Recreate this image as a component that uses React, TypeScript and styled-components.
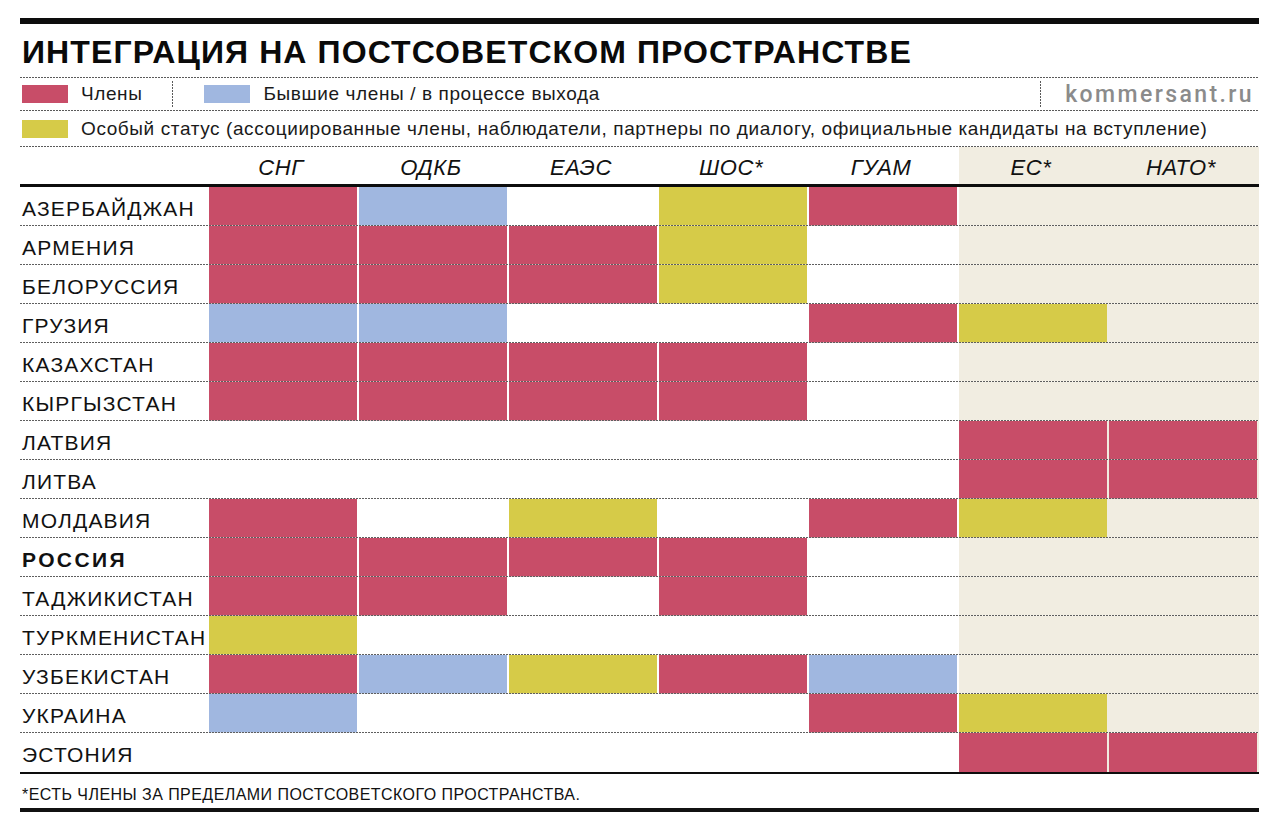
import React from "react";
import styled, { createGlobalStyle, css } from "styled-components";

const RED = "#c84d68";
const BLUE = "#a0b7e0";
const YELLOW = "#d6cb48";
const BEIGE = "#f1ede1";

const GlobalStyle = createGlobalStyle`
  html, body { margin: 0; padding: 0; background: #fff; }
  body { font-family: "Liberation Sans", Arial, sans-serif; color: #111; }
`;

const dottedBottom = css`
  background-image: repeating-linear-gradient(90deg, #5a5a5a 0 2px, transparent 2px 3px);
  background-size: 100% 1px;
  background-repeat: no-repeat;
  background-position: left bottom;
`;

const Page = styled.div`
  width: 1239px;
  margin: 18px 0 0 20px;
  display: flex;
  flex-direction: column;
`;

const TopBar = styled.div`
  height: 6px;
  background: #0d0d0d;
`;

const Title = styled.h1`
  margin: 0;
  height: 53px;
  box-sizing: border-box;
  padding: 4px 0 0 2px;
  line-height: 49px;
  font-size: 32px;
  font-weight: 700;
  letter-spacing: 1.1px;
  color: #0a0a0a;
  white-space: nowrap;
`;

const Legend = styled.div`
  display: flex;
  flex-direction: column;
  padding-top: 1px;
  background-image: repeating-linear-gradient(90deg, #5a5a5a 0 2px, transparent 2px 3px);
  background-size: 100% 1px;
  background-repeat: no-repeat;
  background-position: left top;
`;

const LegendRow = styled.div<{ $h: number }>`
  height: ${(p) => p.$h}px;
  padding-bottom: 1px;
  display: flex;
  align-items: center;
  ${dottedBottom}
`;

const Swatch = styled.span<{ $c: string }>`
  width: 46px;
  height: 18px;
  background: ${(p) => p.$c};
  margin-left: 2px;
  flex: none;
`;

const LegendText = styled.span`
  font-size: 19px;
  letter-spacing: 0.6px;
  color: #1a1a1a;
  margin-left: 13px;
  white-space: nowrap;
`;

const VDivider = styled.span<{ $ml: number; $mr: number }>`
  width: 1px;
  align-self: stretch;
  margin: 3px ${(p) => p.$mr}px 3px ${(p) => p.$ml}px;
  background-image: repeating-linear-gradient(180deg, #5a5a5a 0 2px, transparent 2px 3px);
`;

const Spacer = styled.span`
  flex: 1;
`;

const Site = styled.span`
  font-family: Roboto, "Liberation Sans", sans-serif;
  font-weight: 500;
  font-size: 23px;
  letter-spacing: 2.4px;
  color: #8b8b8b;
  margin-right: 5px;
`;

const Table = styled.div`
  display: flex;
  flex-direction: column;
  border-bottom: 2px solid #0d0d0d;
`;

const HeaderRow = styled.div`
  display: grid;
  grid-template-columns: 189px repeat(7, 150px);
  height: 37px;
  border-bottom: 3px solid #0d0d0d;
`;

const HeadCell = styled.div<{ $shade: boolean }>`
  background: ${(p) => (p.$shade ? BEIGE : "transparent")};
  display: flex;
  align-items: center;
  justify-content: center;
  font-style: italic;
  font-size: 22px;
  letter-spacing: 0.6px;
  color: #111;
  padding: 5px 6px 0 0;
`;

const Row = styled.div<{ $last: boolean }>`
  display: grid;
  grid-template-columns: 189px repeat(7, 150px);
  height: 39px;
  position: relative;
  ${(p) =>
    !p.$last &&
    css`
      &::after {
        content: "";
        position: absolute;
        left: 0;
        right: 0;
        bottom: 0;
        height: 1px;
        background: repeating-linear-gradient(90deg, #5f5f5f 0 2px, rgba(255, 255, 255, 0.55) 2px 3px);
      }
    `}
`;

const Label = styled.div<{ $bold: boolean }>`
  display: flex;
  align-items: center;
  padding-left: 2px;
  padding-top: 4px;
  font-size: 21px;
  letter-spacing: ${(p) => (p.$bold ? "2.4px" : "1.2px")};
  font-weight: ${(p) => (p.$bold ? 700 : 400)};
  color: #111;
  white-space: nowrap;
`;

const Cell = styled.div<{ $fill: string | null; $shade: boolean }>`
  box-sizing: border-box;
  padding-right: 2px;
  background: ${(p) =>
    p.$fill
      ? css`linear-gradient(${p.$fill}, ${p.$fill}) content-box, ${p.$shade ? BEIGE : "#fff"}`
      : p.$shade
      ? BEIGE
      : "#fff"};
`;

const Footnote = styled.div`
  height: 34px;
  display: flex;
  align-items: center;
  padding-left: 2px;
  padding-top: 8px;
  box-sizing: border-box;
  font-size: 16px;
  letter-spacing: 0.45px;
  color: #111;
`;

const BottomBar = styled.div`
  height: 4px;
  background: #111;
`;

type F = "R" | "B" | "Y" | "0";
const colorOf: Record<F, string | null> = { R: RED, B: BLUE, Y: YELLOW, "0": null };

const columns = ["СНГ", "ОДКБ", "ЕАЭС", "ШОС*", "ГУАМ", "ЕС*", "НАТО*"];

const rows: { name: string; cells: string; bold?: boolean }[] = [
  { name: "АЗЕРБАЙДЖАН", cells: "RB0YR00" },
  { name: "АРМЕНИЯ", cells: "RRRY000" },
  { name: "БЕЛОРУССИЯ", cells: "RRRY000" },
  { name: "ГРУЗИЯ", cells: "BB00RY0" },
  { name: "КАЗАХСТАН", cells: "RRRR000" },
  { name: "КЫРГЫЗСТАН", cells: "RRRR000" },
  { name: "ЛАТВИЯ", cells: "00000RR" },
  { name: "ЛИТВА", cells: "00000RR" },
  { name: "МОЛДАВИЯ", cells: "R0Y0RY0" },
  { name: "РОССИЯ", cells: "RRRR000", bold: true },
  { name: "ТАДЖИКИСТАН", cells: "RR0R000" },
  { name: "ТУРКМЕНИСТАН", cells: "Y000000" },
  { name: "УЗБЕКИСТАН", cells: "RBYRB00" },
  { name: "УКРАИНА", cells: "B000RY0" },
  { name: "ЭСТОНИЯ", cells: "00000RR" },
];

export default function App() {
  return (
    <>
      <GlobalStyle />
      <Page>
        <TopBar />
        <Title>ИНТЕГРАЦИЯ НА ПОСТСОВЕТСКОМ ПРОСТРАНСТВЕ</Title>
        <Legend>
          <LegendRow $h={32}>
            <Swatch $c={RED} />
            <LegendText>Члены</LegendText>
            <VDivider $ml={30} $mr={29} />
            <Swatch $c={BLUE} />
            <LegendText>Бывшие члены / в процессе выхода</LegendText>
            <Spacer />
            <VDivider $ml={0} $mr={24} />
            <Site>kommersant.ru</Site>
          </LegendRow>
          <LegendRow $h={35}>
            <Swatch $c={YELLOW} />
            <LegendText>
              Особый статус (ассоциированные члены, наблюдатели, партнеры по диалогу, официальные кандидаты на вступление)
            </LegendText>
          </LegendRow>
        </Legend>
        <Table>
          <HeaderRow>
            <HeadCell $shade={false} />
            {columns.map((c, i) => (
              <HeadCell key={c} $shade={i >= 5}>
                {c}
              </HeadCell>
            ))}
          </HeaderRow>
          {rows.map((r, ri) => (
            <Row key={r.name} $last={ri === rows.length - 1}>
              <Label $bold={!!r.bold}>{r.name}</Label>
              {r.cells.split("").map((f, i) => (
                <Cell key={i} $fill={colorOf[f as F]} $shade={i >= 5} />
              ))}
            </Row>
          ))}
        </Table>
        <Footnote>*ЕСТЬ ЧЛЕНЫ ЗА ПРЕДЕЛАМИ ПОСТСОВЕТСКОГО ПРОСТРАНСТВА.</Footnote>
        <BottomBar />
      </Page>
    </>
  );
}
